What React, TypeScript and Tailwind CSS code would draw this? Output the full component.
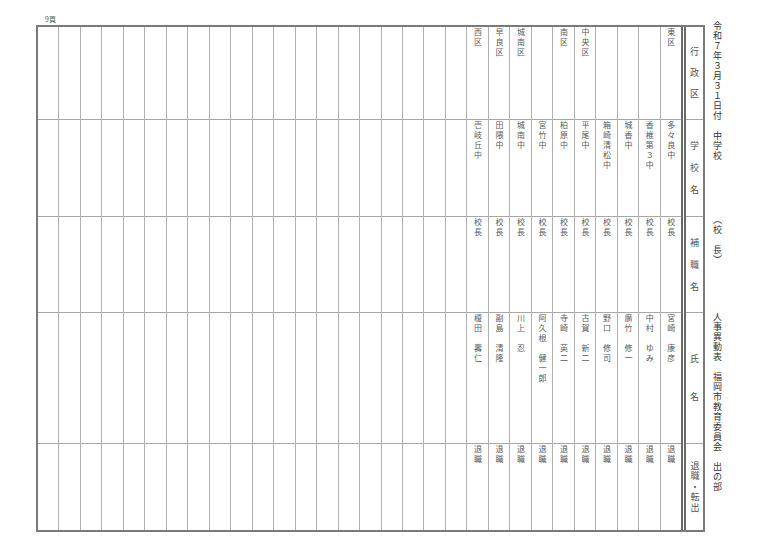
import React from "react";

const ROW_H = ["h-[93px]", "h-[97px]", "h-[96px]", "h-[131px]", "h-[86px]"];

const DATA: string[][] = [
  ["西区", "壱岐丘中", "校長", "榎田　壽仁", "退職"],
  ["早良区", "田隈中", "校長", "副島　清隆", "退職"],
  ["城南区", "城南中", "校長", "川上　忍", "退職"],
  ["", "宮竹中", "校長", "阿久根　健一郎", "退職"],
  ["南区", "柏原中", "校長", "寺崎　英二", "退職"],
  ["中央区", "平尾中", "校長", "古賀　新二", "退職"],
  ["", "箱崎清松中", "校長", "野口　修司", "退職"],
  ["", "城香中", "校長", "廣竹　修一", "退職"],
  ["", "香椎第３中", "校長", "中村　ゆみ", "退職"],
  ["東区", "多々良中", "校長", "宮崎　康彦", "退職"],
];

const COLS: string[][] = [
  ...Array.from({ length: 20 }, () => ["", "", "", "", ""]),
  ...DATA,
];

const HEADERS: { chars: string[]; gap: string }[] = [
  { chars: ["行", "政", "区"], gap: "gap-[11px]" },
  { chars: ["学", "校", "名"], gap: "gap-[12px]" },
  { chars: ["補", "職", "名"], gap: "gap-[12px]" },
  { chars: ["氏", "名"], gap: "gap-[28px]" },
];

const FONT = "font-['Noto_Sans_CJK_JP',sans-serif]";

export default function App() {
  return (
    <div className={`flex w-[780px] h-[551px] bg-white ${FONT}`}>
      <div className="flex flex-col pl-[36px]">
        <div className="h-[25px] pl-[9px] pt-[15px] text-[7px] leading-[8px] text-[#555]">
          9頁
        </div>
        <div className="flex border-2 border-[#7a7a7a]">
          <div className="flex w-[643px]">
            {COLS.map((col, ci) => (
              <div
                key={ci}
                className={`flex-1 flex flex-col ${ci < 29 ? "border-r border-[#b0b0b0]" : ""}`}
              >
                {col.map((t, ri) => (
                  <div
                    key={ri}
                    className={`${ROW_H[ri]} ${ri < 4 ? "border-b border-[#a8a8a8]" : ""} flex justify-center pt-[1px]`}
                  >
                    {t && (
                      <span className="[writing-mode:vertical-rl] text-[8px] leading-[10px] tracking-[2px] text-[#5a5a5a]">
                        {t}
                      </span>
                    )}
                  </div>
                ))}
              </div>
            ))}
          </div>
          <div className="w-[22px] border-l-[5px] border-double border-[#6a6a6a] flex flex-col">
            {HEADERS.map((h, ri) => (
              <div
                key={ri}
                className={`${ROW_H[ri]} border-b border-[#a8a8a8] flex flex-col items-center justify-center ${h.gap}`}
              >
                {h.chars.map((c, k) => (
                  <span key={k} className="text-[9px] leading-[10px] text-[#555]">
                    {c}
                  </span>
                ))}
              </div>
            ))}
            <div className="h-[86px] flex justify-center items-center pt-[1px]">
              <span className="[writing-mode:vertical-rl] text-[9px] leading-[10px] tracking-[1.5px] text-[#555]">
                退職・転出
              </span>
            </div>
          </div>
        </div>
      </div>
      <div className="flex flex-col ml-[6px] pt-[21px] w-[12px] text-[#333]">
        <span className="[writing-mode:vertical-rl] text-[9px] leading-[12px] tracking-[1px]">
          令和７年３月３１日付　中学校
        </span>
        <span className="[writing-mode:vertical-rl] text-[9px] leading-[12px] tracking-[1px] mt-[54px]">
          （校　長）
        </span>
        <span className="[writing-mode:vertical-rl] text-[9px] leading-[12px] tracking-[1px] mt-[47px]">
          人事異動表　福岡市教育委員会　出の部
        </span>
      </div>
    </div>
  );
}
